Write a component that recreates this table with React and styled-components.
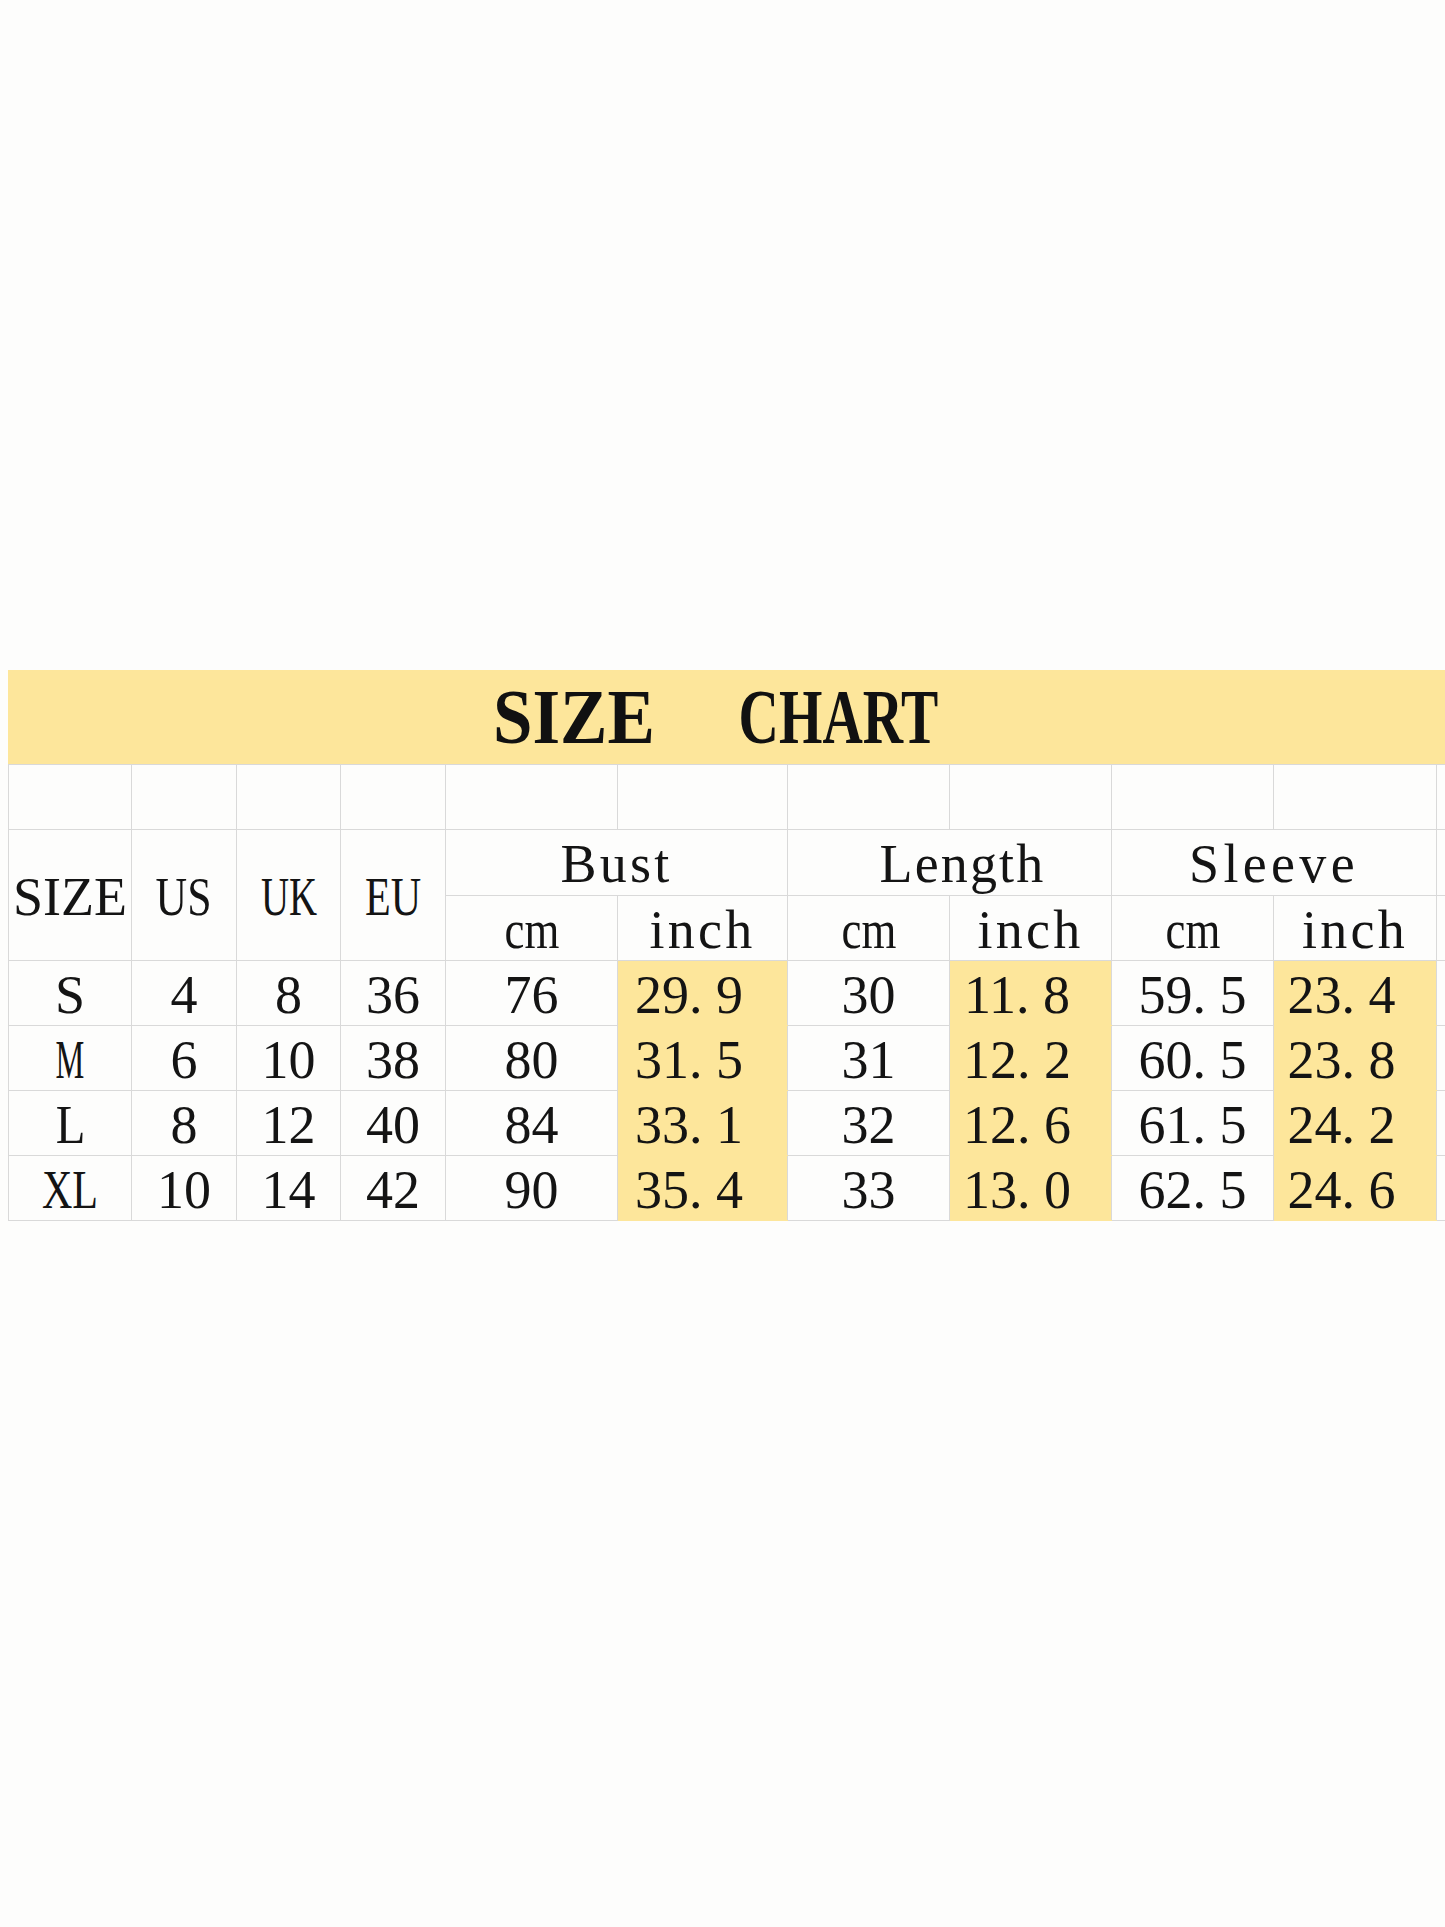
import React from "react";
import styled, { createGlobalStyle } from "styled-components";

const GlobalStyle = createGlobalStyle`
  html, body {
    margin: 0;
    padding: 0;
    background: #fdfdfc;
  }
  body {
    font-family: "Liberation Serif", "Times New Roman", serif;
    color: #141414;
  }
`;

const YELLOW = "#fde69b";
const LINE = "#d9d9d9";

const Page = styled.div`
  width: 1445px;
  height: 1927px;
  box-sizing: border-box;
  padding: 670px 0 0 8px;
  overflow: hidden;
`;

const Chart = styled.section`
  width: 1437px;
  overflow: hidden;
`;

const TitleBand = styled.header`
  height: 94px;
  background: ${YELLOW};
  display: flex;
  align-items: center;
  justify-content: center;
  padding-left: 10px;
`;

const Title = styled.h1`
  margin: 0;
  display: flex;
  gap: 36px;
  font-family: "Liberation Serif", "Times New Roman", serif;
  font-weight: 700;
  font-size: 78px;
  line-height: 1;
  color: #111;
  white-space: nowrap;
`;

const Word = styled.span`
  display: inline-block;
  transform: scaleX(${(p) => p.$sx});
`;

const Table = styled.table`
  border-collapse: collapse;
  table-layout: fixed;
  width: 1548px;
`;

const Row = styled.tr`
  height: ${(p) => p.$h || 65}px;
`;

const Cell = styled.td`
  border: 1px solid ${LINE};
  padding: 3px ${(p) => (p.$trail ? "27px" : "0")} 0 ${(p) => p.$lead || 0}px;
  text-align: center;
  vertical-align: middle;
  font-size: 54px;
  line-height: 1;
  white-space: nowrap;
  letter-spacing: ${(p) => p.$ls || "0"};
  background: ${(p) => (p.$hl ? YELLOW : "transparent")};
  ${(p) =>
    p.$hl &&
    `
    border-top-color: ${YELLOW};
    border-bottom-color: ${YELLOW};
  `}
`;

const Label = styled.span`
  display: inline-block;
  transform: scaleX(${(p) => p.$sx || 1});
`;

const Dot = styled.span`
  margin-right: 0.25em;
`;

const Num = ({ v }) => {
  const [a, b] = v.split(".");
  if (b === undefined) return <>{a}</>;
  return (
    <>
      {a}
      <Dot>.</Dot>
      {b}
    </>
  );
};

const widths = [123, 105, 104, 105, 172, 170, 162, 162, 162, 163, 120];

const sizeScale = { S: 1, M: 0.6, L: 0.9, XL: 0.78 };

const rows = [
  ["S", "4", "8", "36", "76", "29.9", "30", "11.8", "59.5", "23.4"],
  ["M", "6", "10", "38", "80", "31.5", "31", "12.2", "60.5", "23.8"],
  ["L", "8", "12", "40", "84", "33.1", "32", "12.6", "61.5", "24.2"],
  ["XL", "10", "14", "42", "90", "35.4", "33", "13.0", "62.5", "24.6"],
];

export default function App() {
  return (
    <Page>
      <GlobalStyle />
      <Chart>
        <TitleBand>
          <Title>
            <Word $sx={0.91}>SIZE</Word>
            <Word $sx={0.716}>CHART</Word>
          </Title>
        </TitleBand>
        <Table>
          <colgroup>
            {widths.map((w, i) => (
              <col key={i} style={{ width: w }} />
            ))}
          </colgroup>
          <tbody>
            <Row>
              {widths.map((_, i) => (
                <Cell key={i} />
              ))}
            </Row>
            <Row $h={66}>
              <Cell rowSpan={2}>SIZE</Cell>
              <Cell rowSpan={2}>
                <Label $sx={0.81}>US</Label>
              </Cell>
              <Cell rowSpan={2}>
                <Label $sx={0.72}>UK</Label>
              </Cell>
              <Cell rowSpan={2}>
                <Label $sx={0.78}>EU</Label>
              </Cell>
              <Cell colSpan={2} $ls="0.06em">Bust</Cell>
              <Cell colSpan={2} $ls="0.04em" $lead={26}>Length</Cell>
              <Cell colSpan={2} $ls="0.08em">Sleeve</Cell>
              <Cell />
            </Row>
            <Row>
              <Cell>
                <Label $sx={0.83}>cm</Label>
              </Cell>
              <Cell $ls="0.06em">inch</Cell>
              <Cell>
                <Label $sx={0.83}>cm</Label>
              </Cell>
              <Cell $ls="0.06em">inch</Cell>
              <Cell>
                <Label $sx={0.83}>cm</Label>
              </Cell>
              <Cell $ls="0.06em">inch</Cell>
              <Cell />
            </Row>
            {rows.map((r) => (
              <Row key={r[0]}>
                {r.map((v, i) => {
                  const inch = i === 5 || i === 7 || i === 9;
                  return (
                    <Cell key={i} $hl={inch} $trail={inch}>
                      {i === 0 ? (
                        <Label $sx={sizeScale[v]}>{v}</Label>
                      ) : (
                        <Num v={v} />
                      )}
                    </Cell>
                  );
                })}
                <Cell />
              </Row>
            ))}
          </tbody>
        </Table>
      </Chart>
    </Page>
  );
}
